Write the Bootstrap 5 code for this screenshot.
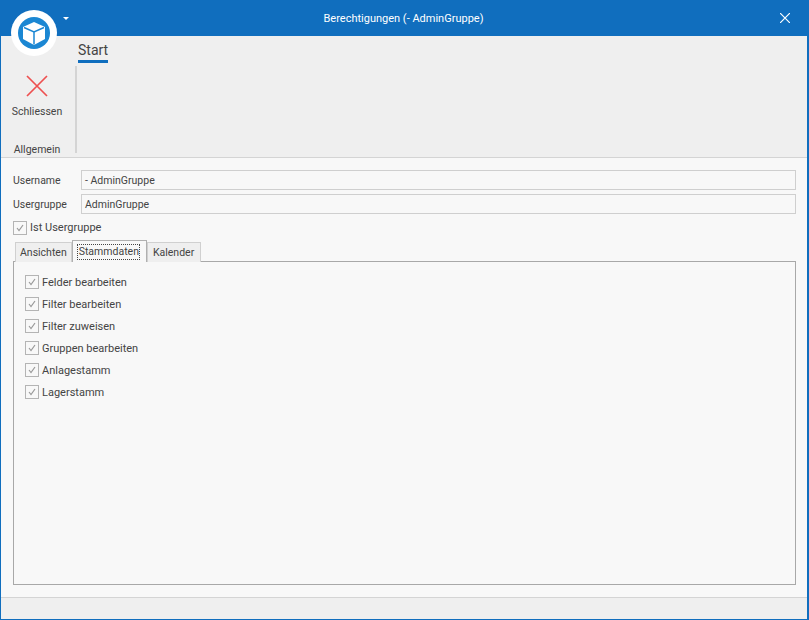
<!DOCTYPE html>
<html lang="de">
<head>
    <meta charset="UTF-8">
    <meta name="viewport" content="width=device-width, initial-scale=1.0">
    <title>Berechtigungen</title>
    <link href="https://cdn.jsdelivr.net/npm/bootstrap@5.3.0/dist/css/bootstrap.min.css" rel="stylesheet">
    <style>
        html, body { height: 100%; overflow: hidden; }
        body {
            font-family: Roboto, "Open Sans", sans-serif;
            font-size: 11px;
            line-height: 16px;
            color: #444;
            background: #f8f8f8;
        }
        .fenster {
            height: 620px;
            border: solid #106ebe;
            border-width: 0 2px 1px 1px;
            position: relative;
        }
        .titelzeile {
            height: 36px;
            flex: none;
            margin: 0 -2px 0 -1px;
            background: #106ebe;
            color: #fff;
            padding: 2px 2px 0 0;
        }
        .schliessen-x { position: absolute; right: 17px; top: 13px; }
        .app-logo {
            position: absolute;
            left: 10px;
            top: 10px;
            width: 46px;
            height: 46px;
            background: #fff;
            border-radius: 50%;
        }
        .app-logo svg { display: block; }
        .app-menu {
            position: absolute;
            left: 62px;
            top: 17px;
            border: 3px solid transparent;
            border-top: 3px solid #fff;
            border-bottom: 0;
        }
        .band {
            height: 122px;
            flex: none;
            background: #efefef;
            border-bottom: 1px solid #d4d4d4;
        }
        .band-gruppe {
            width: 76px;
            margin-top: 30px;
            height: 87px;
            border-right: 2px solid #d4d4d4;
            padding-right: 2px;
            text-align: center;
            font-size: 10.5px;
        }
        .band-gruppe svg { margin-top: 9px; }
        .band-knopf { margin-top: 7px; }
        .band-name { margin-bottom: -5px; }
        .band-titel {
            font-size: 14px;
            line-height: 17px;
            margin-left: 77px;
            position: absolute;
            top: 42px;
            border-bottom: 3px solid #106ebe;
            padding-bottom: 1px;
        }
        .form-bereich { padding: 12px 11px 0 12px; flex: 1 1 auto; min-height: 0; }
        .feld-zeile { margin-bottom: 4px; font-size: 10.5px; }
        .feld-zeile.letzte { margin-bottom: 3px; }
        .feld-label { width: 68px; flex: none; padding-top: 2px; }
        .feld {
            flex: 1 1 auto;
            height: 20px;
            border: 1px solid #cfcfcf;
            background: #f8f8f8;
            padding: 1px 3px 0;
            line-height: 18px;
        }
        .haken {
            width: 14px;
            height: 14px;
            border: 1px solid #b4b4b4;
            background: #f8f8f8;
            margin-right: 3px;
            flex: none;
        }
        .haken svg { display: block; }
        .reiter-leiste {
            height: 22px;
            margin-top: 1px;
            padding-left: 2px;
            position: relative;
            z-index: 1;
            font-size: 10.5px;
        }
        .reiter {
            height: 20px;
            margin-top: 2px;
            border: 1px solid #d0d0d0;
            border-bottom: 0;
            background: #efefef;
            padding: 1px 6px 0 5px;
            line-height: 18px;
        }
        .reiter:first-child { padding: 1px 4px 0; }
        .reiter.aktiv {
            height: 22px;
            margin-top: 0;
            border-color: #b0b0b0;
            background: #f8f8f8;
            padding: 3px 6px 0 4px;
        }
        .reiter.aktiv span { border: 1px dotted #444; display: block; line-height: 14px; padding-left: 1px; }
        .reiter-inhalt {
            height: 324px;
            border: 1px solid #a8a8a8;
            margin-top: -1px;
            padding: 9px 11px;
        }
        .haken-zeile { height: 22px; }
        .reiter-inhalt .haken-zeile { padding-top: 2px; }
        .reiter-inhalt .haken { margin-top: -2px; }
        .fusszeile { height: 22px; background: #efefef; border-top: 1px solid #d4d4d4; flex: none; }
    </style>
</head>
<body>
    <div class="fenster d-flex flex-column">
        <div class="titelzeile d-flex align-items-center justify-content-center">
            <span>Berechtigungen (- AdminGruppe)</span>
            <svg class="schliessen-x" width="10" height="10" viewBox="0 0 10 10"><path d="M0 0 10 10M10 0 0 10" stroke="#fff" stroke-width="1.2" fill="none"/></svg>
        </div>
        <div class="app-logo d-flex align-items-center justify-content-center">
            <svg width="32" height="32" viewBox="0 0 32 32">
                <circle cx="16" cy="16" r="16" fill="#1b87d3"/>
                <path d="M16 5 27 10V22L16 28 5 22V10Z" fill="#fff"/>
                <path d="M6 10.500 16 15 26 10.500M16 15V27.500" stroke="#1b87d3" stroke-width="1.5" fill="none"/>
            </svg>
        </div>
        <div class="app-menu"></div>
        <div class="band d-flex">
            <div class="band-gruppe d-flex flex-column align-items-center">
                <svg width="22" height="22" viewBox="0 0 22 22"><path d="M1 1 21 21M21 1 1 21" stroke="#ee5050" stroke-width="1.7" fill="none"/></svg>
                <div class="band-knopf">Schliessen</div>
                <div class="mt-auto band-name">Allgemein</div>
            </div>
            <div class="band-titel">Start</div>
        </div>
        <div class="form-bereich">
            <div class="d-flex align-items-center feld-zeile">
                <div class="feld-label">Username</div>
                <div class="feld">- AdminGruppe</div>
            </div>
            <div class="d-flex align-items-center feld-zeile letzte">
                <div class="feld-label">Usergruppe</div>
                <div class="feld">AdminGruppe</div>
            </div>
            <div class="d-flex align-items-center haken-zeile">
                <span class="haken"><svg width="12" height="12" viewBox="0 0 12 12"><path d="M3 6 5 8.500 9 3" stroke="#999" stroke-width="1.2" fill="none"/></svg></span>Ist Usergruppe
            </div>
            <div class="reiter-leiste d-flex">
                <div class="reiter">Ansichten</div>
                <div class="reiter aktiv"><span>Stammdaten</span></div>
                <div class="reiter">Kalender</div>
            </div>
            <div class="reiter-inhalt">
                <div class="d-flex align-items-center haken-zeile"><span class="haken"><svg width="12" height="12" viewBox="0 0 12 12"><path d="M3 6 5 8.500 9 3" stroke="#999" stroke-width="1.2" fill="none"/></svg></span>Felder bearbeiten</div>
                <div class="d-flex align-items-center haken-zeile"><span class="haken"><svg width="12" height="12" viewBox="0 0 12 12"><path d="M3 6 5 8.500 9 3" stroke="#999" stroke-width="1.2" fill="none"/></svg></span>Filter bearbeiten</div>
                <div class="d-flex align-items-center haken-zeile"><span class="haken"><svg width="12" height="12" viewBox="0 0 12 12"><path d="M3 6 5 8.500 9 3" stroke="#999" stroke-width="1.2" fill="none"/></svg></span>Filter zuweisen</div>
                <div class="d-flex align-items-center haken-zeile"><span class="haken"><svg width="12" height="12" viewBox="0 0 12 12"><path d="M3 6 5 8.500 9 3" stroke="#999" stroke-width="1.2" fill="none"/></svg></span>Gruppen bearbeiten</div>
                <div class="d-flex align-items-center haken-zeile"><span class="haken"><svg width="12" height="12" viewBox="0 0 12 12"><path d="M3 6 5 8.500 9 3" stroke="#999" stroke-width="1.2" fill="none"/></svg></span>Anlagestamm</div>
                <div class="d-flex align-items-center haken-zeile"><span class="haken"><svg width="12" height="12" viewBox="0 0 12 12"><path d="M3 6 5 8.500 9 3" stroke="#999" stroke-width="1.2" fill="none"/></svg></span>Lagerstamm</div>
            </div>
        </div>
        <div class="fusszeile"></div>
    </div>
    <script src="https://cdn.jsdelivr.net/npm/bootstrap@5.3.0/dist/js/bootstrap.bundle.min.js"></script>
</body>
</html>
